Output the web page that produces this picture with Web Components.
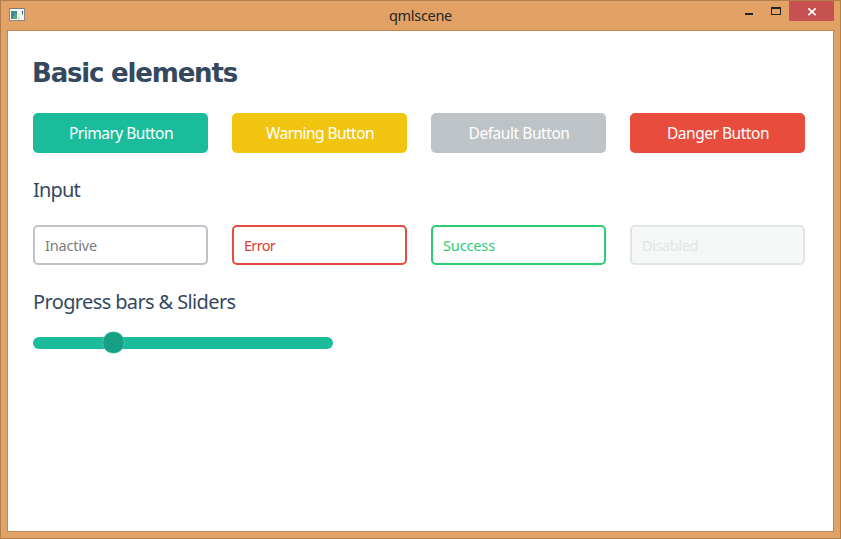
<!DOCTYPE html>
<html lang="en">
<head>
<meta charset="utf-8">
<title>qmlscene</title>
<style>
html, body { margin: 0; height: 100%; overflow: hidden; }
body { font-family: "Noto Sans", "Open Sans", sans-serif; color: #34495e; }
</style>
</head>
<body>
<app-window>
  <fit-text slot="title" width="63">qmlscene</fit-text>
  <page-heading level="1"><fit-text width="205">Basic elements</fit-text></page-heading>
  <control-row>
    <flat-button kind="primary"><fit-text width="104">Primary Button</fit-text></flat-button>
    <flat-button kind="warning"><fit-text width="108">Warning Button</fit-text></flat-button>
    <flat-button kind="default"><fit-text width="101">Default Button</fit-text></flat-button>
    <flat-button kind="danger"><fit-text width="102">Danger Button</fit-text></flat-button>
  </control-row>
  <page-heading level="2"><fit-text width="47">Input</fit-text></page-heading>
  <control-row>
    <flat-field kind="inactive"><fit-text width="52">Inactive</fit-text></flat-field>
    <flat-field kind="error"><fit-text width="31">Error</fit-text></flat-field>
    <flat-field kind="success"><fit-text width="52">Success</fit-text></flat-field>
    <flat-field kind="disabled"><fit-text width="56">Disabled</fit-text></flat-field>
  </control-row>
  <page-heading level="2"><fit-text width="202.5">Progress bars &amp; Sliders</fit-text></page-heading>
  <flat-slider value="26.8"></flat-slider>
</app-window>
<script>
class BaseElement extends HTMLElement {
  constructor() {
    super();
    this.attachShadow({ mode: "open" }).innerHTML = this.constructor.markup;
  }
}

/* Text tracked so that it spans a given width. */
customElements.define("fit-text", class extends BaseElement {
  static markup = `<style>:host{display:inline-block;white-space:nowrap}</style><slot></slot>`;
  fit() {
    this.style.letterSpacing = "0px";
    const natural = this.getBoundingClientRect().width;
    const gap = (Number(this.getAttribute("width")) - natural) / this.textContent.length;
    this.style.letterSpacing = gap.toFixed(3) + "px";
  }
});

customElements.define("page-heading", class extends BaseElement {
  static markup = `<style>
    :host{display:flex;align-items:center;height:72px;font-size:20px;line-height:1;box-sizing:border-box;padding-top:2px}
    :host([level="1"]){height:82px;font-family:"DejaVu Sans",sans-serif;font-size:26px;font-weight:700;padding-top:2px;margin-left:-1px}
  </style><slot></slot>`;
});

customElements.define("control-row", class extends BaseElement {
  static markup = `<style>
    :host{display:grid;grid-template-columns:repeat(4,175px);gap:24px}
  </style><slot></slot>`;
});

customElements.define("flat-button", class extends BaseElement {
  static markup = `<style>
    :host{display:flex;align-items:center;justify-content:center;height:40px;border-radius:5px;
      box-sizing:border-box;padding:2px 0 0 1px;color:#fff;font-size:15.5px;line-height:1;background:#1abc9c}
    :host([kind="warning"]){background:#f1c40f}
    :host([kind="default"]){background:#bdc3c7}
    :host([kind="danger"]){background:#e74c3c}
  </style><slot></slot>`;
});

customElements.define("flat-field", class extends BaseElement {
  static markup = `<style>
    :host{display:flex;align-items:center;height:40px;box-sizing:border-box;padding:0 9px 0 10px;
      border:2px solid #bdc3c7;border-radius:5px;color:#7b7b7b;font-size:14.5px;line-height:1;background:#fff}
    :host([kind="error"]){border-color:#e74c3c;color:#d9423a}
    :host([kind="success"]){border-color:#2ecc71;color:#2ecc71}
    :host([kind="disabled"]){border-color:#dfe6e5;color:#e0e6e6;background:#f6f8f8}
  </style><slot></slot>`;
});

customElements.define("flat-slider", class extends BaseElement {
  static markup = `<style>
    :host{display:block;position:relative;width:300px;height:12px;border-radius:6px;background:#1abc9c}
    i{position:absolute;top:-5px;left:70px;width:21px;height:21px;border-radius:50%;background:#16a085;
      box-shadow:0 0 0 .5px #5fcbb5}
  </style><i></i>`;
  connectedCallback() {
    this.shadowRoot.querySelector("i").style.left =
      Math.round(this.getAttribute("value") * 3 - 10.5) + "px";
  }
});

customElements.define("app-icon", class extends BaseElement {
  static markup = `<style>:host{display:block;width:16px;height:13px}svg{display:block}</style>
    <svg width="16" height="13" shape-rendering="crispEdges">
      <rect width="16" height="13" fill="#8f8881"/>
      <rect x="0" width="16" height="1" fill="#747b82"/>
      <rect x="1" y="1" width="14" height="11" fill="#f5f5f2"/>
      <rect x="2" y="3" width="6" height="8" fill="#3f8c94"/>
      <path d="M4 11V8H6V5H8V11Z" fill="#59a977"/>
      <rect x="9" y="9" width="2" height="2" fill="#d5d7dc"/>
      <rect x="13" y="3" width="1" height="2" fill="#243f74"/>
      <rect x="13" y="5" width="1" height="2" fill="#43967a"/>
    </svg>`;
});

customElements.define("window-controls", class extends BaseElement {
  static markup = `<style>
    :host{display:flex;height:20px}
    span{display:block;width:27px;height:20px}
    .close{width:45px;background:#c75050}
    svg{display:block}
  </style>
  <span><svg width="27" height="20"><path d="M10 12h8v2h-8z" fill="#222"/></svg></span>
  <span><svg width="27" height="20" shape-rendering="crispEdges"><path d="M9 6h10v8H9zM10 8v5h8V8z" fill="#222" fill-rule="evenodd"/></svg></span>
  <span class="close"><svg width="45" height="20"><path d="M19.3 7.3L26.7 14.2M26.7 7.3L19.3 14.2" stroke="#fff" stroke-width="1.7"/></svg></span>`;
});

customElements.define("app-window", class extends BaseElement {
  static markup = `<style>
    :host{display:flex;flex-direction:column;width:841px;height:539px;box-sizing:border-box;
      background:#e2a266;border:1px solid #b27e4c;padding:0 6px 6px}
    header{display:grid;grid-template-columns:102px 1fr 102px;height:29px;flex:none;
      color:#252525;font-size:14.5px;line-height:1}
    app-icon{margin:7px 0 0 2px}
    .title{justify-self:center;margin-top:7px}
    window-controls{justify-self:end}
    main{flex:1;border:1px solid #bf8650;background:#fff;padding:0 24px 0 25px;display:block}
  </style>
  <header><app-icon></app-icon><div class="title"><slot name="title"></slot></div><window-controls></window-controls></header>
  <main><slot></slot></main>`;
});

document.querySelectorAll("fit-text").forEach(t => t.fit());
</script>
</body>
</html>
